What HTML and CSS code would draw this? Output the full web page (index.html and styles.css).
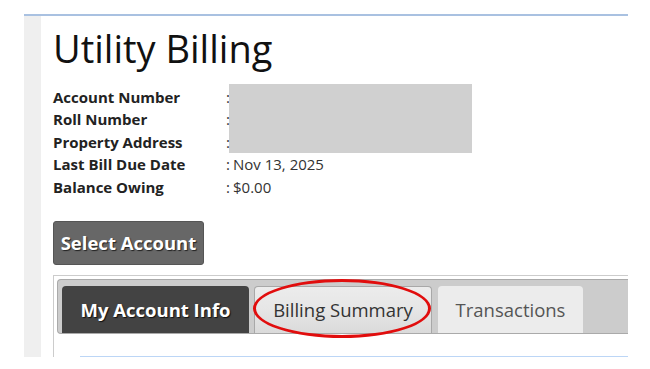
FILE: index.html
```html
<!DOCTYPE html>
<html>
<head>
<meta charset="utf-8">
<link rel="stylesheet" href="styles.css">
</head>
<body>
<div class="page">
  <div class="strip"></div>
  <div class="content">
    <h1 class="title">Utility Billing</h1>
    <div class="info">
      <div class="lbl">Account Number</div><div class="col">:</div><div class="redact"></div>
      <div class="lbl">Roll Number</div><div class="col">:</div>
      <div class="lbl">Property Address</div><div class="col">:</div>
      <div class="lbl">Last Bill Due Date</div><div class="col">:</div><div class="val">Nov 13, 2025</div>
      <div class="lbl">Balance Owing</div><div class="col">:</div><div class="val">$0.00</div>
    </div>
    <button class="select-btn">Select Account</button>
    <div class="tabbox">
      <div class="tabbar">
        <div class="tab active">My Account Info</div>
        <div class="tab billing">Billing Summary<span class="circle"></span></div>
        <div class="tab plain">Transactions</div>
      </div>
      <div class="panel"><div class="panel-line"></div></div>
    </div>
  </div>
</div>
</body>
</html>
```
FILE: styles.css
```css
* { box-sizing: border-box; }
body {
  margin: 0;
  background: #fff;
  font-family: "Open Sans", "DejaVu Sans", sans-serif;
  color: #222;
}
.page {
  margin: 14px 0 0 24px;
  width: 604px;
  height: 343px;
  border-top: 2px solid #a9c1e1;
  display: flex;
  overflow: hidden;
}
.strip {
  width: 17px;
  flex: none;
  background: #efefef;
}
.content {
  flex: 1;
  padding-left: 12px;
  min-width: 0;
}
.title {
  margin: 8px 0 0;
  font-size: 38px;
  font-weight: 400;
  line-height: 48px;
  color: #111;
}
.info {
  margin-top: 14px;
  display: grid;
  grid-template-columns: 173px 3px 1fr;
  grid-auto-rows: 22.4px;
  font-size: 15px;
  line-height: 22.4px;
}
.lbl {
  grid-column: 1;
  font-weight: 700;
  color: #222;
}
.col { grid-column: 2; color: #333; }
.val { grid-column: 3; padding-left: 4px; color: #333; }
.redact {
  grid-column: 3;
  grid-row: 1 / span 3;
  width: 243px;
  margin-top: -2px;
  background: #d0d0d0;
}
.select-btn {
  display: block;
  margin-top: 23px;
  height: 44px;
  width: 151px;
  padding: 0;
  background: #676767;
  border: 1px solid #555;
  border-radius: 3px;
  color: #fff;
  font-family: "Open Sans", sans-serif;
  font-weight: 700;
  font-size: 18.5px;
  text-shadow: 1px 1px 1px #222;
}
.tabbox {
  margin-top: 10px;
  width: 640px;
  border: 1px solid #ccc;
  border-right: none;
  padding: 3px 0 0 3px;
  height: 120px;
}
.tabbar {
  display: flex;
  align-items: flex-end;
  height: 55px;
  padding: 6px 4px 0 4px;
  background: #cccccc;
  border: 1px solid #aaa;
  border-right: none;
  border-radius: 4px 0 0 4px;
}
.tab {
  height: 47px;
  display: flex;
  align-items: center;
  font-size: 18.5px;
  border-radius: 4px 4px 0 0;
}
.tab.active {
  width: 187px;
  justify-content: center;
  background: #434343;
  color: #fff;
  font-weight: 700;
  margin-right: 5px;
  text-shadow: 1px 1px 1px #111;
}
.tab.billing {
  position: relative;
  width: 178px;
  justify-content: center;
  background: linear-gradient(#ececec, #e6e6e6 50%, #dadada);
  border: 1px solid #a8a8a8;
  border-bottom: none;
  color: #333;
  margin-right: 6px;
}
.tab.plain {
  width: 145px;
  justify-content: center;
  background: #ececec;
  color: #555;
}
.circle {
  position: absolute;
  left: -2px;
  right: 0;
  top: -8px;
  bottom: -5px;
  border: 3px solid #e10d0d;
  border-radius: 50%;
}
.panel {
  padding: 22px 0 0 23px;
}
.panel-line {
  border-top: 1px solid #bcd6f6;
}
```
